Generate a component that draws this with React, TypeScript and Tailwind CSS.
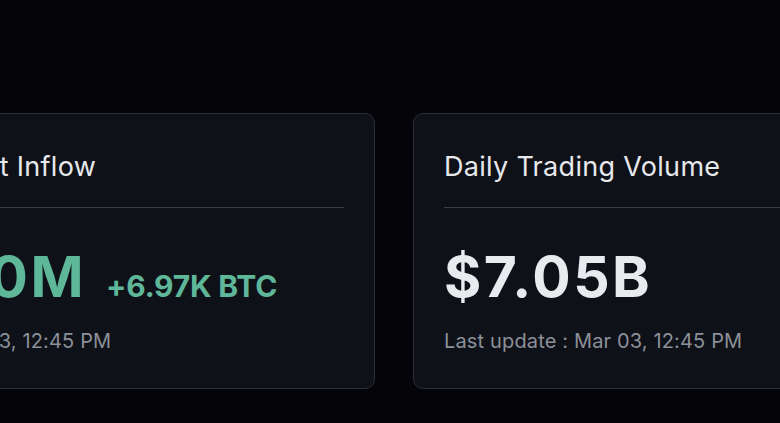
import React from 'react'

type Stat = {
  title: string
  value: string
  change?: string
  positive?: boolean
  updated: string
}

const stats: Stat[] = [
  { title: 'Exchanges Net Inflow', value: '$28.20M', change: '+6.97K BTC', positive: true, updated: 'Last update : Mar 03, 12:45 PM' },
  { title: 'Daily Trading Volume', value: '$7.05B', updated: 'Last update : Mar 03, 12:45 PM' },
]

function StatCard({ stat }: { stat: Stat }) {
  return (
    <div className="w-[593px] h-[276px] shrink-0 rounded-[10px] border border-[#2b2e35] bg-[#0f1118] px-[30px] pt-[33px]">
      {/* Title */}
      <div className="text-[27px] leading-[40px] tracking-[0.3px] text-[#e6e8ec] whitespace-nowrap">{stat.title}</div>
      <div className="mt-[20px] h-px bg-[#3a3d44]" />

      {/* Value */}
      <div className="mt-[33px] flex items-baseline gap-[20px] whitespace-nowrap">
        <span
          className={`text-[57px] leading-[72px] font-bold tracking-[2.5px] ${
            stat.positive ? 'text-[#5fb79a]' : 'text-[#e8eaee]'
          }`}
        >
          {stat.value}
        </span>
        {stat.change && (
          <span className="text-[30px] font-bold tracking-[-0.2px] text-[#5fb79a]">{stat.change}</span>
        )}
      </div>

      {/* Meta */}
      <div className="mt-[14px] text-[20px] leading-[28px] tracking-[0.15px] text-[#8b9099] whitespace-nowrap">
        {stat.updated}
      </div>
    </div>
  )
}

export default function App() {
  return (
    <div
      className="w-[780px] h-[423px] overflow-hidden bg-[#050509] pt-[113px]"
      style={{ fontFamily: 'Inter, "Noto Sans", sans-serif' }}
    >
      <div className="-ml-[218px] flex gap-[38px]">
        {stats.map((s) => (
          <StatCard key={s.title} stat={s} />
        ))}
      </div>
    </div>
  )
}
